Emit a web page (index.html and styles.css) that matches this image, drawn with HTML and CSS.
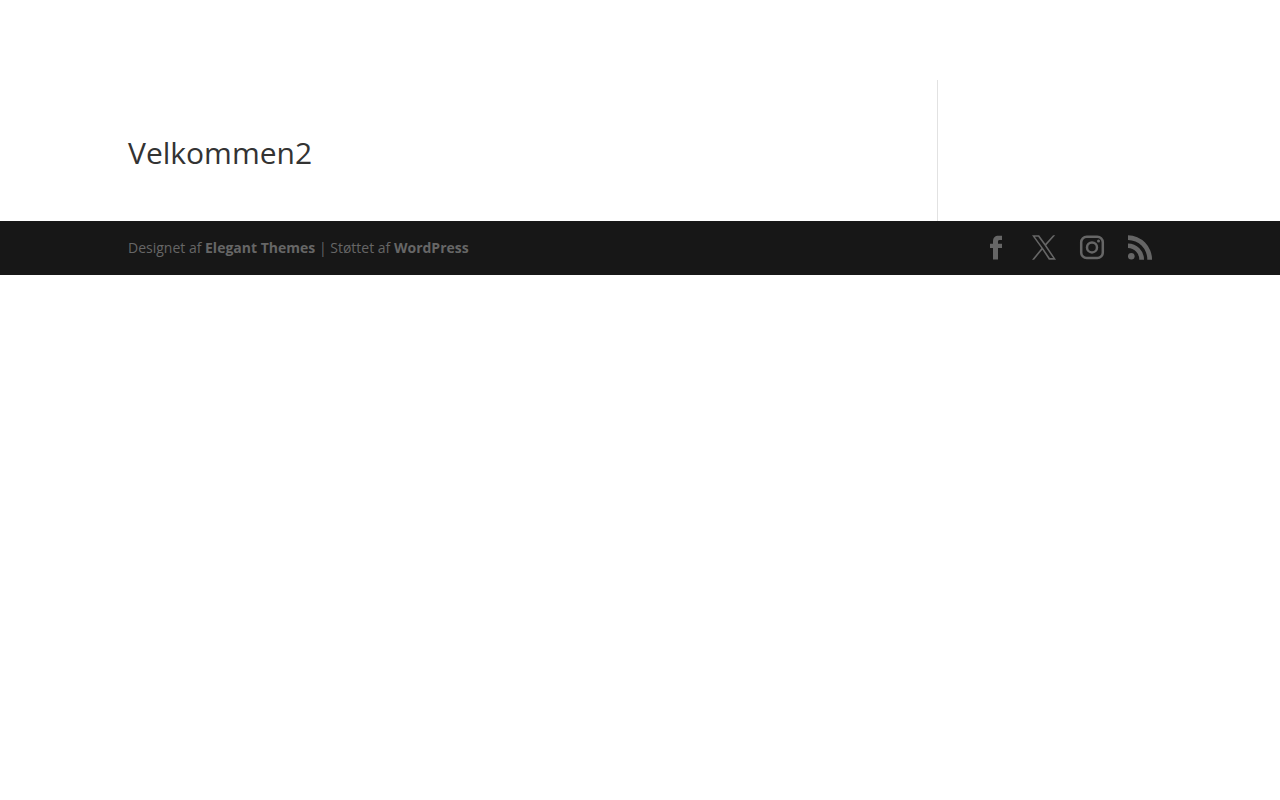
FILE: index.html
```html
<!DOCTYPE html>
<html lang="da">
<head>
<meta charset="utf-8">
<meta name="viewport" content="width=device-width, initial-scale=1">
<title>Velkommen2</title>
<link rel="stylesheet" href="styles.css">
</head>
<body>
<header class="site-header"></header>
<main class="container content">
  <article class="post">
    <h1 class="post-title">Velkommen2</h1>
  </article>
</main>
<footer class="site-footer">
  <div class="container footer-row">
    <p class="footer-info">Designet af <a href="#">Elegant Themes</a> | Støttet af <a href="#">WordPress</a></p>
    <ul class="social">
      <li><a href="#" aria-label="Facebook"><svg viewBox="0 0 24 24"><path d="M9 24.500V13H6V8.700h3V6.500C9 2.500 11 .700 14.500.700H18V5h-2.200C14.400 5 14 5.600 14 6.800v1.900h4V13h-4v11.500z"/></svg></a></li>
      <li><a href="#" aria-label="X"><svg viewBox="0 0 24 24"><path d="M14.280 10.160 23.220 .300h-2.120l-7.760 8.520L7.150.300H0l9.370 13.040L0 24.700h2.120l8.200-10.020L16.850 24.700H24zM11.380 13.460l-.950-1.330L2.880 1.860h3.250l6.100 8.240.950 1.330 7.920 11.690h-3.250z"/></svg></a></li>
      <li><a href="#" aria-label="Instagram"><svg viewBox="0 0 24 24"><rect class="outline" x="1.200" y="1.700" width="21.600" height="21.400" rx="5.500"/><circle class="outline" cx="12" cy="12.400" r="5"/><circle cx="18.500" cy="6" r="1.500"/></svg></a></li>
      <li><a href="#" aria-label="RSS"><svg viewBox="0 0 24 24"><circle cx="3.300" cy="21.300" r="3.300"/><path d="M0 8.400v4.700A11.600 11.600 0 0 1 11.300 24.700H16A16.200 16.200 0 0 0 0 8.400z"/><path d="M0 .200v4.700A19.500 19.500 0 0 1 19.300 24.700H24A24.200 24.200 0 0 0 0 .200z"/></svg></a></li>
    </ul>
  </div>
</footer>
</body>
</html>
```
FILE: styles.css
```css
body {
  margin: 0;
  background: #fff;
  color: #666;
  font: 14px/24px "Open Sans", Arial, sans-serif;
}

.site-header {
  height: 80px;
}

.container {
  width: 80%;
  max-width: 1080px;
  margin: 0 auto;
}

.content {
  display: grid;
  grid-template-columns: 79.125% 1fr;
}

.post {
  padding: 58px 0 53px;
  border-right: 1px solid #e2e2e2;
}

.post-title {
  margin: 0;
  color: #333;
  font-size: 30px;
  font-weight: 500;
  line-height: 30px;
}

.site-footer {
  padding: 14px 0;
  background: #171717;
}

.footer-row {
  display: flex;
  flex-wrap: wrap;
  align-items: center;
  justify-content: space-between;
}

.footer-info {
  margin: 0;
}

.footer-info a {
  color: inherit;
  font-weight: 700;
  text-decoration: none;
}

.social {
  display: flex;
  gap: 24px;
  margin: 0;
  padding: 0 0 2px;
  list-style: none;
}

.social a {
  display: block;
  color: #666;
}

.social svg {
  display: block;
  width: 24px;
  height: 24px;
  fill: currentColor;
  overflow: visible;
}

.social .outline {
  fill: none;
  stroke: currentColor;
  stroke-width: 2.5;
}
```
